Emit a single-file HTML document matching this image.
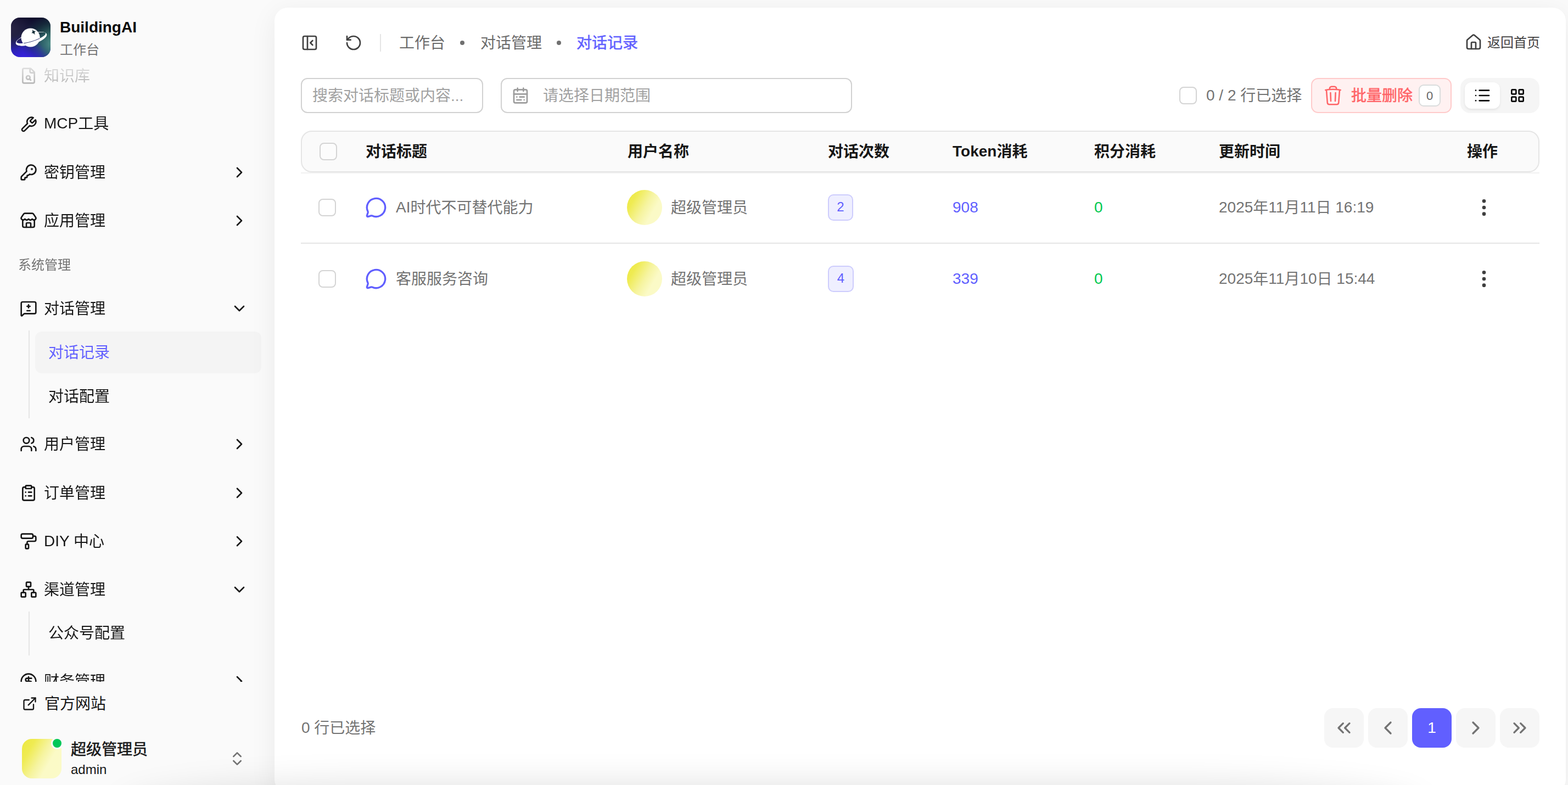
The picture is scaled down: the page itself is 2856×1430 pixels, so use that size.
<!DOCTYPE html>
<html lang="zh-CN">
<head>
<meta charset="utf-8">
<title>BuildingAI</title>
<style>
*{box-sizing:border-box;margin:0;padding:0}
html,body{width:2856px;height:1430px;overflow:hidden;background:#fafafa}
body{font-family:"Liberation Sans","Noto Sans CJK SC",sans-serif;font-size:28px;color:#171717;position:relative}
.a{position:absolute;white-space:nowrap}
.t{position:absolute;white-space:nowrap;height:40px;line-height:40px;margin-top:-19px}
svg{display:block}
.ic{position:absolute;fill:none;stroke:currentColor;stroke-width:2;stroke-linecap:round;stroke-linejoin:round}
.i32{width:32px;height:32px;margin:-16px 0 0 -16px}
.i40{width:40px;height:40px;margin:-20px 0 0 -20px}
.muted{color:#737373}
.pri{color:#615fff !important}
/* sidebar */
#side{position:absolute;left:0;top:0;width:500px;height:1430px;background:#fafafa}
#scroll{position:absolute;left:0;top:116px;width:500px;height:1126px;overflow:hidden;
 -webkit-mask-image:linear-gradient(to bottom,transparent 0,rgba(0,0,0,.14) 10px,rgba(0,0,0,.3) 38px,#000 84px);mask-image:linear-gradient(to bottom,transparent 0,rgba(0,0,0,.14) 10px,rgba(0,0,0,.3) 38px,#000 84px)}
.mi{font-size:28px;color:#171717}
.sub{font-size:28px}
.vline{position:absolute;left:52px;width:2px;background:#e5e5e5}
/* panel */
#panel{position:absolute;left:500px;top:14px;width:2352px;height:1430px;background:#fff;border-radius:24px;box-shadow:0 10px 50px rgba(0,0,0,.065)}
.inp{position:absolute;top:142px;height:64px;border:2px solid #d1d1d1;border-radius:12px;background:#fff}
.cb{position:absolute;width:32px;height:32px;border:2px solid #d4d4d4;border-radius:8px;background:#fff}
.th{font-weight:bold;color:#171717}
.pg{position:absolute;top:1290px;width:72px;height:72px;border-radius:16px;background:#f6f6f6;color:#737373}
.av{width:64px;height:64px;border-radius:50%;background:linear-gradient(120deg,#ece83e 0%,#efeb52 22%,#f6f4a0 50%,#fbfac6 70%,#fbfac8 100%)}
.bd{width:46px;height:48px;border:2px solid #cdccfd;border-radius:10px;background:#efefff;color:#615fff;font-size:24px;line-height:41px;text-align:center}
.med{-webkit-text-stroke:.55px currentColor}
.n{position:relative;top:-1.5px}
</style>
</head>
<body>

<div id="side">
<svg class="a" style="left:20px;top:32px" width="72" height="72" viewBox="0 0 72 72">
<defs>
<linearGradient id="lg1" x1=".35" y1="0" x2=".5" y2="1"><stop offset="0" stop-color="#0d0a29"/><stop offset=".4" stop-color="#191c40"/><stop offset=".72" stop-color="#2a22a8"/><stop offset="1" stop-color="#3521dc"/></linearGradient>
<radialGradient id="lg2" cx="1.05" cy=".66" r=".78"><stop offset="0" stop-color="#4f9686" stop-opacity=".95"/><stop offset=".35" stop-color="#2f6c61" stop-opacity=".85"/><stop offset=".7" stop-color="#16353c" stop-opacity=".6"/><stop offset="1" stop-color="#142c38" stop-opacity="0"/></radialGradient>
<radialGradient id="lg3" cx="0" cy=".28" r=".55"><stop offset="0" stop-color="#2a2545" stop-opacity=".95"/><stop offset="1" stop-color="#2a2545" stop-opacity="0"/></radialGradient>
<radialGradient id="lg4" cx=".5" cy="1.1" r=".5"><stop offset="0" stop-color="#3620e2" stop-opacity=".9"/><stop offset="1" stop-color="#3620e2" stop-opacity="0"/></radialGradient>
<clipPath id="lc"><rect width="72" height="72" rx="16"/></clipPath>
</defs>
<g clip-path="url(#lc)"><rect width="72" height="72" fill="url(#lg1)"/><rect width="72" height="72" fill="url(#lg2)"/><rect width="72" height="72" fill="url(#lg3)"/><rect width="72" height="72" fill="url(#lg4)"/></g>
<clipPath id="lf"><rect x="0" y="38.200" width="72" height="40"/></clipPath>
<g transform="rotate(-17 36 35.700)"><path d="M6.600 38.900a29.400 9.900 0 1 0 58.800 0a29.400 9.900 0 1 0-58.800 0ZM8.700 37.050a27.600 6.650 0 1 0 55.200 0a27.600 6.650 0 1 0-55.200 0Z" fill="#fff" fill-rule="evenodd"/></g>
<circle cx="35.600" cy="36.500" r="17.100" fill="#fff"/>
<g transform="rotate(-17 36 35.700)">
<path d="M6.600 38.900a29.400 9.900 0 1 0 58.800 0a29.400 9.900 0 1 0-58.800 0ZM8.700 37.050a27.600 6.650 0 1 0 55.200 0a27.600 6.650 0 1 0-55.200 0Z" fill="#fff" fill-rule="evenodd" clip-path="url(#lf)"/>
<path d="M21 42.600A27.600 6.650 0 0 0 50.500 42.700" fill="none" stroke="#222a6a" stroke-width="1" stroke-linecap="round"/>
</g>
<path transform="translate(41.200 26.500) rotate(-26)" d="M0-5.900C.7-1.700 1.500-.9 4.400 0C1.500.9.7 1.700 0 5.900C-.7 1.700-1.500.9-4.400 0C-1.500-.9-.7-1.700 0-5.900Z" fill="#16303a"/>
</svg>
<div class="t" style="left:109px;top:49px;font-size:28px;font-weight:bold;color:#0a0a0a;letter-spacing:0">BuildingAI</div>
<div class="t muted" style="left:109px;top:90px;font-size:24px">工作台</div>
<!--S0-->
<div id="scroll">
<svg class="ic i32" style="left:52px;top:22px" viewBox="0 0 24 24"><path d="M15 2H6a2 2 0 0 0-2 2v16a2 2 0 0 0 2 2h12a2 2 0 0 0 2-2V7Z"/><path d="M14 2v4a2 2 0 0 0 2 2h4"/><circle cx="11.5" cy="14.5" r="2.5"/><path d="M13.3 16.3 15 18"/></svg>
<div class="t mi" style="left:80px;top:22px">知识库</div>
<svg class="ic i32" style="left:52px;top:110.5px" viewBox="0 0 24 24"><path d="M14.7 6.3a1 1 0 0 0 0 1.4l1.6 1.6a1 1 0 0 0 1.4 0l3.77-3.77a6 6 0 0 1-7.94 7.94l-6.91 6.91a2.12 2.12 0 0 1-3-3l6.91-6.91a6 6 0 0 1 7.94-7.94l-3.76 3.76z"/></svg>
<div class="t mi" style="left:80px;top:109px"><span class="n">MCP</span>工具</div>
<svg class="ic i32" style="left:52px;top:198px" viewBox="0 0 24 24"><path d="M2.586 17.414A2 2 0 0 0 2 18.828V21a1 1 0 0 0 1 1h3a1 1 0 0 0 1-1v-1a1 1 0 0 1 1-1h1a1 1 0 0 0 1-1v-1a1 1 0 0 1 1-1h.172a2 2 0 0 0 1.414-.586l.814-.814a6.5 6.5 0 1 0-4-4z"/><circle cx="16.5" cy="7.5" r=".5" fill="currentColor"/></svg>
<div class="t mi" style="left:80px;top:198px">密钥管理</div>
<svg class="ic i32" style="left:436px;top:198px" viewBox="0 0 24 24"><path d="m9 18 6-6-6-6"/></svg>
<svg class="ic i32" style="left:52px;top:286px" viewBox="0 0 24 24"><path d="M15 21v-5a1 1 0 0 0-1-1h-4a1 1 0 0 0-1 1v5"/><path d="M17.774 10.310a1.120 1.120 0 0 0-1.549 0 2.500 2.500 0 0 1-3.451 0 1.120 1.120 0 0 0-1.548 0 2.500 2.500 0 0 1-3.452 0 1.120 1.120 0 0 0-1.549 0 2.500 2.500 0 0 1-3.770-3.248l2.889-4.184A2 2 0 0 1 7 2h10a2 2 0 0 1 1.653.873l2.895 4.192a2.500 2.500 0 0 1-3.774 3.244"/><path d="M4 10.950V19a2 2 0 0 0 2 2h12a2 2 0 0 0 2-2v-8.050"/></svg>
<div class="t mi" style="left:80px;top:286px">应用管理</div>
<svg class="ic i32" style="left:436px;top:286px" viewBox="0 0 24 24"><path d="m9 18 6-6-6-6"/></svg>
<div class="t muted" style="left:33px;top:366px;font-size:24px">系统管理</div>
<svg class="ic i32" style="left:52px;top:446px" viewBox="0 0 24 24"><path d="M22 17a2 2 0 0 1-2 2H6.828a2 2 0 0 0-1.414.586l-2.202 2.202A.71.71 0 0 1 2 21.286V5a2 2 0 0 1 2-2h16a2 2 0 0 1 2 2z"/><path d="M10 15h4"/><path d="M10 9h4"/><path d="M12 7v4"/></svg>
<div class="t mi" style="left:80px;top:446px">对话管理</div>
<svg class="ic i32" style="left:436px;top:446px" viewBox="0 0 24 24"><path d="m6 9 6 6 6-6"/></svg>
<div class="vline" style="top:486px;height:160px"></div>
<div class="a" style="left:64px;top:488px;width:412px;height:76px;border-radius:12px;background:#f4f4f4"></div>
<div class="t sub pri" style="left:88px;top:526px">对话记录</div>
<div class="t sub" style="left:88px;top:606px">对话配置</div>
<svg class="ic i32" style="left:52px;top:693px" viewBox="0 0 24 24"><path d="M16 21v-2a4 4 0 0 0-4-4H6a4 4 0 0 0-4 4v2"/><circle cx="9" cy="7" r="4"/><path d="M22 21v-2a4 4 0 0 0-3-3.870"/><path d="M16 3.130a4 4 0 0 1 0 7.750"/></svg>
<div class="t mi" style="left:80px;top:693px">用户管理</div>
<svg class="ic i32" style="left:436px;top:693px" viewBox="0 0 24 24"><path d="m9 18 6-6-6-6"/></svg>
<svg class="ic i32" style="left:52px;top:782px" viewBox="0 0 24 24"><rect width="8" height="4" x="8" y="2" rx="1" ry="1"/><path d="M16 4h2a2 2 0 0 1 2 2v14a2 2 0 0 1-2 2H6a2 2 0 0 1-2-2V6a2 2 0 0 1 2-2h2"/><path d="M12 11h4"/><path d="M12 16h4"/><path d="M8 11h.01"/><path d="M8 16h.01"/></svg>
<div class="t mi" style="left:80px;top:782px">订单管理</div>
<svg class="ic i32" style="left:436px;top:782px" viewBox="0 0 24 24"><path d="m9 18 6-6-6-6"/></svg>
<svg class="ic i32" style="left:52px;top:870px" viewBox="0 0 24 24"><rect width="16" height="6" x="2" y="2" rx="2"/><path d="M10 16v-2a2 2 0 0 1 2-2h8a2 2 0 0 0 2-2V7a2 2 0 0 0-2-2h-2"/><rect width="4" height="6" x="8" y="16" rx="1"/></svg>
<div class="t mi" style="left:80px;top:870px"><span class="n">DIY</span> 中心</div>
<svg class="ic i32" style="left:436px;top:870px" viewBox="0 0 24 24"><path d="m9 18 6-6-6-6"/></svg>
<svg class="ic i32" style="left:52px;top:958px" viewBox="0 0 24 24"><rect x="16" y="16" width="6" height="6" rx="1"/><rect x="2" y="16" width="6" height="6" rx="1"/><rect x="9" y="2" width="6" height="6" rx="1"/><path d="M5 16v-3a1 1 0 0 1 1-1h12a1 1 0 0 1 1 1v3"/><path d="M12 12V8"/></svg>
<div class="t mi" style="left:80px;top:958px">渠道管理</div>
<svg class="ic i32" style="left:436px;top:958px" viewBox="0 0 24 24"><path d="m6 9 6 6 6-6"/></svg>
<div class="vline" style="top:998px;height:80px"></div>
<div class="t sub" style="left:88px;top:1037px">公众号配置</div>
<svg class="ic i32" style="left:52px;top:1125px" viewBox="0 0 24 24"><circle cx="12" cy="12" r="10"/><path d="M16 8h-6a2 2 0 1 0 0 4h4a2 2 0 1 1 0 4H8"/><path d="M12 18V6"/></svg>
<div class="t mi" style="left:80px;top:1125px">财务管理</div>
<svg class="ic i32" style="left:436px;top:1125px" viewBox="0 0 24 24"><path d="m9 18 6-6-6-6"/></svg>
</div>
<!--S1-->
<svg class="ic" style="left:40px;top:1268px;width:28px;height:28px" viewBox="0 0 24 24"><path d="M15 3h6v6"/><path d="M10 14 21 3"/><path d="M18 13v6a2 2 0 0 1-2 2H5a2 2 0 0 1-2-2V8a2 2 0 0 1 2-2h6"/></svg>
<div class="t mi" style="left:81px;top:1282px">官方网站</div>
<div class="a" style="left:40px;top:1346px;width:72px;height:72px;border-radius:18px;background:linear-gradient(120deg,#ece83e 0%,#efeb52 22%,#f6f4a0 48%,#fbfac6 66%,#fbfac8 100%)"></div>
<div class="a" style="left:93px;top:1343px;width:22px;height:22px;border-radius:50%;background:#00c758;border:3px solid #fafafa"></div>
<div class="t med" style="left:129px;top:1365px;font-size:28px;color:#171717">超级管理员</div>
<div class="t" style="left:129px;top:1401px;font-size:24px;color:#171717">admin</div>
<svg class="ic i32" style="left:432px;top:1382px;color:#737373" viewBox="0 0 24 24"><path d="m7 15 5 5 5-5"/><path d="m7 9 5-5 5 5"/></svg>
</div>
<div id="panel"></div>
<svg class="ic i32" style="left:564px;top:78px;color:#404040" viewBox="0 0 24 24"><rect width="18" height="18" x="3" y="3" rx="2"/><path d="M9 3v18"/><path d="m16 15-3-3 3-3"/></svg>
<svg class="ic i32" style="left:644px;top:78px;color:#404040" viewBox="0 0 24 24"><path d="M3 12a9 9 0 1 0 9-9 9.750 9.750 0 0 0-6.740 2.740L3 8"/><path d="M3 3v5h5"/></svg>
<div class="a" style="left:692px;top:62px;width:2px;height:32px;background:#e5e5e5"></div>
<div class="t" style="left:727px;top:78px;color:#6b6b6b">工作台</div>
<div class="a" style="left:838px;top:74px;width:8px;height:8px;border-radius:50%;background:#707070"></div>
<div class="t" style="left:875px;top:78px;color:#6b6b6b">对话管理</div>
<div class="a" style="left:1014px;top:74px;width:8px;height:8px;border-radius:50%;background:#707070"></div>
<div class="t pri med" style="left:1050px;top:78px">对话记录</div>
<svg class="ic i32" style="left:2684px;top:77px;color:#404040" viewBox="0 0 24 24"><path d="M15 21v-8a1 1 0 0 0-1-1h-4a1 1 0 0 0-1 1v8"/><path d="M3 10a2 2 0 0 1 .709-1.528l7-5.999a2 2 0 0 1 2.582 0l7 5.999A2 2 0 0 1 21 10v9a2 2 0 0 1-2 2H5a2 2 0 0 1-2-2z"/></svg>
<div class="t" style="left:2709px;top:77px;font-size:24px;color:#404040">返回首页</div>
<div class="inp" style="left:548px;width:332px"></div>
<div class="t" style="left:569px;top:174px;color:#a1a1a1">搜索对话标题或内容...</div>
<div class="inp" style="left:912px;width:640px"></div>
<svg class="ic i32" style="left:948px;top:174px;color:#9c9c9c" viewBox="0 0 24 24"><path d="M8 2v4"/><path d="M16 2v4"/><rect width="18" height="18" x="3" y="4" rx="2"/><path d="M3 10h18"/><path d="M17 14h-6"/><path d="M13 18H7"/><path d="M7 14h.01"/><path d="M17 18h.01"/></svg>
<div class="t" style="left:989px;top:174px;color:#a1a1a1">请选择日期范围</div>
<div class="cb" style="left:2148px;top:158px"></div>
<div class="t muted" style="left:2197px;top:174px"><span class="n">0 / 2</span> 行已选择</div>
<div class="a" style="left:2388px;top:142px;width:256px;height:64px;border:2px solid #ffcaca;border-radius:13px;background:#fff1f1"></div>
<svg class="ic" style="left:2408px;top:154px;width:40px;height:40px;color:#ff6467;stroke-width:1.5" viewBox="0 0 24 24"><path d="m14.740 9-.346 9m-4.788 0L9.260 9m9.968-3.210c.342.052.682.107 1.022.166m-1.022-.165L18.160 19.673a2.250 2.250 0 0 1-2.244 2.077H8.084a2.250 2.250 0 0 1-2.244-2.077L4.772 5.790m14.456 0a48.108 48.108 0 0 0-3.478-.397m-12 .562c.340-.059.680-.114 1.022-.165m0 0a48.110 48.110 0 0 1 3.478-.397m7.500 0v-.916c0-1.180-.910-2.164-2.090-2.201a51.964 51.964 0 0 0-3.320 0c-1.180.037-2.090 1.022-2.090 2.201v.916m7.500 0a48.667 48.667 0 0 0-7.500 0"/></svg>
<div class="t med" style="left:2461px;top:174px;color:#ff6467">批量删除</div>
<div class="a" style="left:2584px;top:154px;width:40px;height:40px;border:2px solid #d9dcdc;border-radius:9px;background:#fff;font-size:22px;line-height:37px;text-align:center;color:#666">0</div>
<div class="a" style="left:2660px;top:142px;width:144px;height:64px;border-radius:18px;background:#f5f5f5"></div>
<div class="a" style="left:2668px;top:150px;width:64px;height:48px;border-radius:12px;background:#fff;box-shadow:0 2px 4px rgba(0,0,0,.08)"></div>
<svg class="ic i32" style="left:2700px;top:174px;color:#0a0a0a" viewBox="0 0 24 24"><path d="M3 5h.01"/><path d="M3 12h.01"/><path d="M3 19h.01"/><path d="M8 5h13"/><path d="M8 12h13"/><path d="M8 19h13"/></svg>
<svg class="ic i32" style="left:2764px;top:174px;color:#0a0a0a" viewBox="0 0 24 24"><rect width="6" height="6" x="4" y="4" rx="1"/><rect width="6" height="6" x="14" y="4" rx="1"/><rect width="6" height="6" x="14" y="14" rx="1"/><rect width="6" height="6" x="4" y="14" rx="1"/></svg>
<div class="a" style="left:548px;top:314px;width:2256px;height:2px;background:#f1f1f1"></div>
<div class="a" style="left:548px;top:238px;width:2256px;height:76px;border:2px solid #e5e5e5;border-radius:20px;background:#fafafa"></div>
<div class="cb" style="left:582px;top:260px;background:#fcfcfc"></div>
<div class="t th" style="left:666px;top:276px">对话标题</div>
<div class="t th" style="left:1143px;top:276px">用户名称</div>
<div class="t th" style="left:1508px;top:276px">对话次数</div>
<div class="t th" style="left:1735px;top:276px"><span class="n">Token</span>消耗</div>
<div class="t th" style="left:1993px;top:276px">积分消耗</div>
<div class="t th" style="left:2220px;top:276px">更新时间</div>
<div class="t th" style="left:2672px;top:276px">操作</div>
<!--ROW1-->
<div class="cb" style="left:580px;top:362px"></div>
<svg class="ic i40 pri" style="left:685px;top:378px" viewBox="0 0 24 24"><path d="M2.992 16.342a2 2 0 0 1 .094 1.167l-1.065 3.290a1 1 0 0 0 1.236 1.168l3.413-.998a2 2 0 0 1 1.099.092 10 10 0 1 0-4.777-4.719"/></svg>
<div class="t muted" style="left:721px;top:378px"><span class="n">AI</span>时代不可替代能力</div>
<div class="a av" style="left:1142px;top:346px"></div>
<div class="t muted" style="left:1222px;top:378px">超级管理员</div>
<div class="a bd" style="left:1508px;top:354px">2</div>
<div class="t pri" style="left:1735px;top:378px"><span class="n">908</span></div>
<div class="t" style="left:1993px;top:378px;color:#00c950"><span class="n">0</span></div>
<div class="t muted" style="left:2220px;top:378px"><span class="n">2025</span>年<span class="n">11</span>月<span class="n">11</span>日 <span class="n">16:19</span></div>
<svg class="ic i40" style="left:2703px;top:378px;color:#3f3f3f" viewBox="0 0 24 24"><circle cx="12" cy="12" r="1" fill="currentColor"/><circle cx="12" cy="5" r="1" fill="currentColor"/><circle cx="12" cy="19" r="1" fill="currentColor"/></svg>
<div class="a" style="left:548px;top:442px;width:2256px;height:2px;background:#e5e5e5"></div>
<!--ROW2-->
<div class="cb" style="left:580px;top:492px"></div>
<svg class="ic i40 pri" style="left:685px;top:508px" viewBox="0 0 24 24"><path d="M2.992 16.342a2 2 0 0 1 .094 1.167l-1.065 3.290a1 1 0 0 0 1.236 1.168l3.413-.998a2 2 0 0 1 1.099.092 10 10 0 1 0-4.777-4.719"/></svg>
<div class="t muted" style="left:721px;top:508px">客服服务咨询</div>
<div class="a av" style="left:1142px;top:476px"></div>
<div class="t muted" style="left:1222px;top:508px">超级管理员</div>
<div class="a bd" style="left:1508px;top:484px;width:47px">4</div>
<div class="t pri" style="left:1735px;top:508px"><span class="n">339</span></div>
<div class="t" style="left:1993px;top:508px;color:#00c950"><span class="n">0</span></div>
<div class="t muted" style="left:2220px;top:508px"><span class="n">2025</span>年<span class="n">11</span>月<span class="n">10</span>日 <span class="n">15:44</span></div>
<svg class="ic i40" style="left:2703px;top:508px;color:#3f3f3f" viewBox="0 0 24 24"><circle cx="12" cy="12" r="1" fill="currentColor"/><circle cx="12" cy="5" r="1" fill="currentColor"/><circle cx="12" cy="19" r="1" fill="currentColor"/></svg>
<div class="t muted" style="left:549px;top:1326px"><span class="n">0</span> 行已选择</div>
<div class="pg" style="left:2412px"><svg class="ic i40" style="left:36px;top:36px" viewBox="0 0 24 24"><path d="m11 17-5-5 5-5"/><path d="m18 17-5-5 5-5"/></svg></div>
<div class="pg" style="left:2492px"><svg class="ic i40" style="left:36px;top:36px" viewBox="0 0 24 24"><path d="m15 18-6-6 6-6"/></svg></div>
<div class="pg" style="left:2572px;background:#615fff;color:#fff;text-align:center;line-height:72px;font-size:28px">1</div>
<div class="pg" style="left:2652px"><svg class="ic i40" style="left:36px;top:36px" viewBox="0 0 24 24"><path d="m9 18 6-6-6-6"/></svg></div>
<div class="pg" style="left:2732px"><svg class="ic i40" style="left:36px;top:36px" viewBox="0 0 24 24"><path d="m6 17 5-5-5-5"/><path d="m13 17 5-5-5-5"/></svg></div>
<div class="a" style="left:230px;top:1438px;width:2350px;height:80px;border-radius:440px/40px;box-shadow:0 0 60px 12px rgba(0,0,0,.115);pointer-events:none"></div>
</body>
</html>
